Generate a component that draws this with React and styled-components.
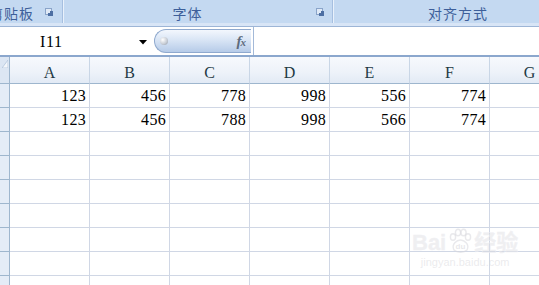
import React from 'react';
import styled, { createGlobalStyle } from 'styled-components';

const Global = createGlobalStyle`
  html, body { margin: 0; padding: 0; background: #fff; overflow: hidden; }
  #root { width: 539px; height: 285px; }
`;

const Page = styled.div`
  position: relative;
  width: 539px;
  height: 285px;
  overflow: hidden;
  background: #fff;
  display: flex;
  flex-direction: column;
`;

const Ribbon = styled.div`
  display: flex;
  height: 23px;
  flex-shrink: 0;
  background: #c4d9f1;
`;

const Group = styled.div`
  display: flex;
  align-items: center;
  width: ${p => p.$w}px;
  flex-shrink: 0;
  padding-right: ${p => p.$pr || 0}px;
  box-sizing: border-box;
`;

const GroupLabel = styled.div`
  flex: 1;
  display: flex;
  justify-content: ${p => p.$align || 'center'};
  padding-right: ${p => p.$pr || 0}px;
  padding-top: 2px;
  font-family: "Noto Sans CJK SC", sans-serif;
  font-size: 14px;
  letter-spacing: 1px;
  color: #3d5f9a;
  white-space: nowrap;
  overflow: hidden;
`;

const Separator = styled.div`
  width: 2px;
  flex-shrink: 0;
  border-left: 1px solid #a6bfe0;
  background: #e9f1fb;
  box-sizing: border-box;
`;

const RibbonFoot = styled.div`
  height: 3px;
  flex-shrink: 0;
  background: #d8e5f6;
  border-bottom: 1px solid #9db5d6;
`;

const FormulaBar = styled.div`
  display: flex;
  align-items: center;
  height: 28px;
  flex-shrink: 0;
  background: #fff;
  border-bottom: 2px solid #8ba7cd;
`;

const NameBox = styled.div`
  width: 139px;
  box-sizing: border-box;
  padding-left: 40px;
  padding-top: 2px;
  font-family: "Liberation Serif", "DejaVu Serif", serif;
  font-size: 16px;
  letter-spacing: 0.6px;
  color: #000;
`;

const Pill = styled.div`
  display: flex;
  align-items: center;
  justify-content: space-between;
  width: 97px;
  height: 24px;
  margin-left: 7px;
  box-sizing: border-box;
  border: 1px solid #8fa9ce;
  border-right: none;
  border-radius: 12px 0 0 12px;
  background: linear-gradient(180deg, #f3f7fd 0%, #d9e5f5 45%, #b6cbe8 100%);
  padding: 0 6px 0 5px;
`;

const Knob = styled.div`
  width: 8px;
  height: 8px;
  border-radius: 50%;
  background: radial-gradient(circle at 35% 35%, #ffffff 0%, #c9ced6 55%, #8e96a3 100%);
`;

const Fx = styled.span`
  font-family: "Liberation Serif", serif;
  font-style: italic;
  font-weight: bold;
  font-size: 15px;
  color: #5e6b7d;
  letter-spacing: -1px;
  & small { font-size: 11px; }
`;

const FormulaInput = styled.div`
  flex: 1;
  align-self: stretch;
  margin-left: 2px;
  border-left: 1px solid #a3b9d8;
`;

const Sheet = styled.div`
  display: grid;
  grid-template-columns: 10px repeat(7, 80px);
  grid-auto-rows: 24px;
  grid-template-rows: 27px;
`;

const Corner = styled.div`
  background: #dce6f3;
  border-right: 1px solid #9eb6ce;
  border-bottom: 1px solid #9eb6ce;
  box-sizing: border-box;
  display: flex;
  align-items: flex-start;
  justify-content: flex-end;
  padding: 3px 1px 0 0;
`;

const ColHead = styled.div`
  box-sizing: border-box;
  border-right: 1px solid #c9d6e6;
  border-bottom: 1px solid #9eb6ce;
  background: linear-gradient(180deg, #f7f9fd 0%, #edf2f9 60%, #e2eaf5 100%);
  display: flex;
  justify-content: center;
  align-items: center;
  padding-top: 5px;
  font-family: "Liberation Serif", "DejaVu Serif", serif;
  font-size: 16px;
  color: #1f3a44;
`;

const RowHead = styled.div`
  box-sizing: border-box;
  background: #e4ecf7;
  border-right: 1px solid #9eb6ce;
  border-bottom: 1px solid #9eb6ce;
`;

const Cell = styled.div`
  box-sizing: border-box;
  border-right: 1px solid #d0d7e5;
  border-bottom: 1px solid #d0d7e5;
  display: flex;
  align-items: center;
  justify-content: flex-end;
  padding-right: 3px;
  padding-top: 1px;
  font-family: "Liberation Serif", "DejaVu Serif", serif;
  font-size: 16px;
  letter-spacing: 0.3px;
  color: #000;
`;

const Watermark = styled.div`
  position: absolute;
  left: 412px;
  top: 228px;
  display: flex;
  flex-direction: column;
  align-items: center;
  color: rgba(220, 220, 225, 0.45);
  font-family: "Liberation Sans", "Noto Sans CJK SC", sans-serif;
  pointer-events: none;
`;

const WmTop = styled.div`
  display: flex;
  align-items: flex-end;
  font-size: 22px;
  font-weight: bold;
  line-height: 22px;
  -webkit-text-stroke: 0.5px rgba(240, 240, 244, 0.9);
`;

const WmSub = styled.div`
  font-size: 11px;
  line-height: 12px;
  margin-top: 2px;
  color: rgba(215, 215, 220, 0.5);
`;

const Launcher = () => (
  <svg width="8" height="8" viewBox="0 0 8 8" style={{ flexShrink: 0, marginLeft: 5 }}>
    <rect x="0.5" y="0.5" width="6" height="6" fill="#dfe9f6" stroke="#8aa4c9" />
    <rect x="3" y="3" width="5" height="5" fill="#4d6fa3" />
    <rect x="3" y="3" width="2" height="2" fill="#dfe9f6" />
  </svg>
);

const DropArrow = () => (
  <svg width="8" height="5" viewBox="0 0 8 5" style={{ flexShrink: 0, marginTop: 2 }}>
    <path d="M0 0 H8 L4 4.5 Z" fill="#000" />
  </svg>
);

const CornerMark = () => (
  <svg width="6" height="8" viewBox="0 0 6 8">
    <path d="M6 0 V8 H0 Z" fill="#f4f7fb" stroke="#b3c5dc" strokeWidth="0.8" />
  </svg>
);

const Paw = () => (
  <svg width="26" height="26" viewBox="0 0 26 26" style={{ margin: '0 1px' }}>
    <g fill="none" stroke="rgba(215,215,220,0.55)" strokeWidth="1.4">
      <ellipse cx="6" cy="9" rx="2.6" ry="3.2" />
      <ellipse cx="11" cy="4.5" rx="2.6" ry="3.2" />
      <ellipse cx="16.5" cy="4.5" rx="2.6" ry="3.2" />
      <ellipse cx="21" cy="9" rx="2.6" ry="3.2" />
      <path d="M7 22 C4 16 10 12 13.5 12 C17 12 23 16 20 22 C17 25 10 25 7 22 Z" />
    </g>
    <text x="13.5" y="21" textAnchor="middle" fontSize="8" fontFamily="Liberation Sans, sans-serif" fill="rgba(215,215,220,0.6)">du</text>
  </svg>
);

const columns = ['A', 'B', 'C', 'D', 'E', 'F', 'G'];
const data = [
  ['123', '456', '778', '998', '556', '774', ''],
  ['123', '456', '788', '998', '566', '774', ''],
];
const TOTAL_ROWS = 9;

export default function App() {
  const rows = [];
  for (let r = 0; r < TOTAL_ROWS; r++) rows.push(data[r] || columns.map(() => ''));

  return (
    <Page>
      <Global />
      <Ribbon>
        <Group $w={62} $pr={9}>
          <GroupLabel $align="flex-end" $pr={6}>剪贴板</GroupLabel>
          <Launcher />
        </Group>
        <Separator />
        <Group $w={268} $pr={8}>
          <GroupLabel>字体</GroupLabel>
          <Launcher />
        </Group>
        <Separator />
        <Group $w={248}>
          <GroupLabel>对齐方式</GroupLabel>
        </Group>
      </Ribbon>
      <RibbonFoot />
      <FormulaBar>
        <NameBox>I11</NameBox>
        <DropArrow />
        <Pill>
          <Knob />
          <Fx>f<small>x</small></Fx>
        </Pill>
        <FormulaInput />
      </FormulaBar>
      <Sheet>
        <Corner><CornerMark /></Corner>
        {columns.map(c => <ColHead key={c}>{c}</ColHead>)}
        {rows.map((row, ri) => (
          <React.Fragment key={ri}>
            <RowHead />
            {row.map((v, ci) => <Cell key={ci}>{v}</Cell>)}
          </React.Fragment>
        ))}
      </Sheet>
      <Watermark>
        <WmTop>Bai<Paw />经验</WmTop>
        <WmSub>jingyan.baidu.com</WmSub>
      </Watermark>
    </Page>
  );
}
